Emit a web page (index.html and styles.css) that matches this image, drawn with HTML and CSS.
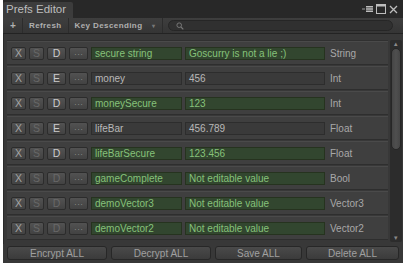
FILE: index.html
```html
<!DOCTYPE html>
<html lang="en">
<head>
  <meta charset="UTF-8">
  <title>Prefs Editor</title>
  <link rel="stylesheet" href="styles.css">
</head>
<body>
  <div class="window">
    <div class="titlebar">
      <div class="tab">Prefs Editor</div>
      <div class="win-icons">
        <svg width="11" height="8" viewBox="0 0 11 8"><path d="M0 3.5h3v1H0z" fill="#9a9a9a"/><path d="M4 1h7v1.5H4zM4 3.3h7v1.5H4zM4 5.6h7v1.5H4z" fill="#bdbdbd"/></svg>
        <svg width="10" height="10" viewBox="0 0 10 10"><rect x="0.5" y="0.5" width="9" height="9" fill="none" stroke="#bdbdbd"/><rect x="0.5" y="0.5" width="9" height="2" fill="#bdbdbd"/></svg>
        <svg width="9" height="9" viewBox="0 0 9 9"><path d="M1 1l7 7M8 1l-7 7" stroke="#bdbdbd" stroke-width="1.3"/></svg>
      </div>
    </div>

    <div class="toolbar">
      <span class="tool plus">+</span>
      <span class="tool">Refresh</span>
      <span class="tool sort">Key Descending <i class="caret">&#9662;</i></span>
      <div class="search">
        <svg width="8" height="8" viewBox="0 0 8 8"><circle cx="3.2" cy="3.2" r="2.3" fill="none" stroke="#777" stroke-width="1"/><path d="M5 5l2.3 2.3" stroke="#777" stroke-width="1.2"/></svg>
      </div>
    </div>

    <div class="content">
      <div class="rows">
        <div class="row">
          <span class="btn">X</span><span class="btn dim">S</span><span class="btn wide">D</span><span class="btn wide dots">...</span>
          <span class="field name green">secure string</span>
          <span class="field value green">Goscurry is not a lie ;)</span>
          <span class="type">String</span>
        </div>
        <div class="row">
          <span class="btn">X</span><span class="btn dim">S</span><span class="btn wide">E</span><span class="btn wide dots">...</span>
          <span class="field name">money</span>
          <span class="field value">456</span>
          <span class="type">Int</span>
        </div>
        <div class="row">
          <span class="btn">X</span><span class="btn dim">S</span><span class="btn wide">D</span><span class="btn wide dots">...</span>
          <span class="field name green">moneySecure</span>
          <span class="field value green">123</span>
          <span class="type">Int</span>
        </div>
        <div class="row">
          <span class="btn">X</span><span class="btn dim">S</span><span class="btn wide">E</span><span class="btn wide dots">...</span>
          <span class="field name">lifeBar</span>
          <span class="field value">456.789</span>
          <span class="type">Float</span>
        </div>
        <div class="row">
          <span class="btn">X</span><span class="btn dim">S</span><span class="btn wide">D</span><span class="btn wide dots">...</span>
          <span class="field name green">lifeBarSecure</span>
          <span class="field value green">123.456</span>
          <span class="type">Float</span>
        </div>
        <div class="row">
          <span class="btn">X</span><span class="btn dim">S</span><span class="btn wide dim">D</span><span class="btn wide dots">...</span>
          <span class="field name green">gameComplete</span>
          <span class="field value green">Not editable value</span>
          <span class="type">Bool</span>
        </div>
        <div class="row">
          <span class="btn">X</span><span class="btn dim">S</span><span class="btn wide dim">D</span><span class="btn wide dots">...</span>
          <span class="field name green">demoVector3</span>
          <span class="field value green">Not editable value</span>
          <span class="type">Vector3</span>
        </div>
        <div class="row">
          <span class="btn">X</span><span class="btn dim">S</span><span class="btn wide dim">D</span><span class="btn wide dots">...</span>
          <span class="field name green">demoVector2</span>
          <span class="field value green">Not editable value</span>
          <span class="type">Vector2</span>
        </div>
      </div>
      <div class="scrollbar">
        <span class="arrow">&#9652;</span>
        <div class="track"><div class="thumb"></div></div>
        <span class="arrow">&#9662;</span>
      </div>
    </div>

    <div class="footer">
      <button class="encrypt">Encrypt ALL</button>
      <button class="decrypt">Decrypt ALL</button>
      <button class="save">Save ALL</button>
      <button class="delete">Delete ALL</button>
    </div>
  </div>
</body>
</html>
```

FILE: styles.css
```css
* {
  margin: 0;
  padding: 0;
  box-sizing: border-box;
}

body {
  background: #ffffff;
  font-family: "Liberation Sans", sans-serif;
  font-size: 10px;
  color: #b4b4b4;
}

.window {
  margin-left: 3px;
  width: 400px;
  height: 263px;
  background: #282828;
  display: flex;
  flex-direction: column;
}

/* title bar */
.titlebar {
  height: 18px;
  display: flex;
  align-items: flex-end;
  justify-content: space-between;
}

.tab {
  width: 70px;
  height: 16px;
  padding: 1px 0 0 3px;
  background: #3c3c3c;
  border-radius: 2px 2px 0 0;
  font-size: 11.5px;
  color: #bcbcbc;
}

.win-icons {
  display: flex;
  align-items: center;
  gap: 3px;
  padding: 0 5px 4px 0;
}

/* toolbar */
.toolbar {
  height: 16px;
  display: flex;
  align-items: center;
  background: linear-gradient(#3e3e3e, #353535);
  border-bottom: 1px solid #232323;
}

.tool {
  height: 100%;
  display: flex;
  align-items: center;
  padding: 0 6px;
  border-right: 1px solid #2c2c2c;
  font-size: 8px;
  font-weight: bold;
  letter-spacing: 0.4px;
  color: #b0b0b0;
}

.plus {
  width: 20px;
  padding: 0 0 0 7px;
  font-size: 10px;
}

.sort {
  width: 94px;
  justify-content: space-between;
}

.caret {
  font-style: normal;
  font-size: 6px;
  color: #777;
}

.search {
  flex: 1;
  height: 11px;
  margin: 0 10px 0 5px;
  padding-left: 7px;
  display: flex;
  align-items: center;
  background: #303030;
  border: 1px solid #262626;
  border-radius: 6px;
}

/* list */
.content {
  flex: 1;
  display: flex;
  background: #383838;
  padding: 6px 1px 2px 3px;
  border-left: 1px solid #2a2a2a;
}

.rows {
  flex: 1;
  display: flex;
  flex-direction: column;
  gap: 1px;
  border-top: 1px solid #303030;
}

.row {
  height: 24px;
  display: flex;
  align-items: center;
  gap: 3px;
  padding: 0 4px;
  background: #3f3f3f;
  border-top: 1px solid #4a4a4a;
  border-bottom: 1px solid #2e2e2e;
}

.btn {
  width: 15px;
  height: 13px;
  display: flex;
  align-items: center;
  justify-content: center;
  background: linear-gradient(#525252, #424242);
  border: 1px solid #2c2c2c;
  border-radius: 2px;
  font-size: 10.5px;
  color: #a4a4a4;
}

.btn.wide {
  width: 19px;
  color: #cccccc;
}

.btn.dim,
.btn.wide.dim {
  color: #686868;
}

.btn.dots {
  align-items: flex-end;
  padding: 0 0 2px 1px;
  font-size: 8px;
  line-height: 1;
  letter-spacing: 1px;
  color: #9a9a9a;
}

.field {
  height: 13px;
  display: flex;
  align-items: center;
  padding-left: 3px;
  background: #3a3a3a;
  border: 1px solid #2d2d2d;
  color: #b8b8b8;
  white-space: nowrap;
  overflow: hidden;
}

.field.green {
  background: #32462f;
  border-color: #26331f;
  color: #86c27a;
}

.name {
  width: 91px;
}

.value {
  width: 140px;
}

.type {
  padding-left: 2px;
  color: #a8a8a8;
}

/* scrollbar */
.scrollbar {
  width: 12px;
  margin-left: 2px;
  display: flex;
  flex-direction: column;
  background: #2c2c2c;
  border-radius: 2px;
}

.arrow {
  height: 8px;
  font-size: 7px;
  line-height: 8px;
  text-align: center;
  color: #8a8a8a;
}

.track {
  flex: 1;
  padding: 0 1px;
}

.thumb {
  height: 102px;
  background: linear-gradient(90deg, #454545, #4f4f4f, #454545);
  border: 1px solid #262626;
  border-radius: 5px;
}

/* footer */
.footer {
  height: 19px;
  display: flex;
  gap: 4px;
  padding: 2px 0 0 4px;
  background: #383838;
}

.footer button {
  height: 14px;
  background: linear-gradient(#4a4a4a, #3b3b3b);
  border: 1px solid #272727;
  border-radius: 3px;
  font-family: "Liberation Sans", sans-serif;
  font-size: 10px;
  color: #a0a0a0;
}

.encrypt,
.decrypt {
  width: 100px;
}

.save {
  width: 87px;
}

.delete {
  width: 93px;
}
```
